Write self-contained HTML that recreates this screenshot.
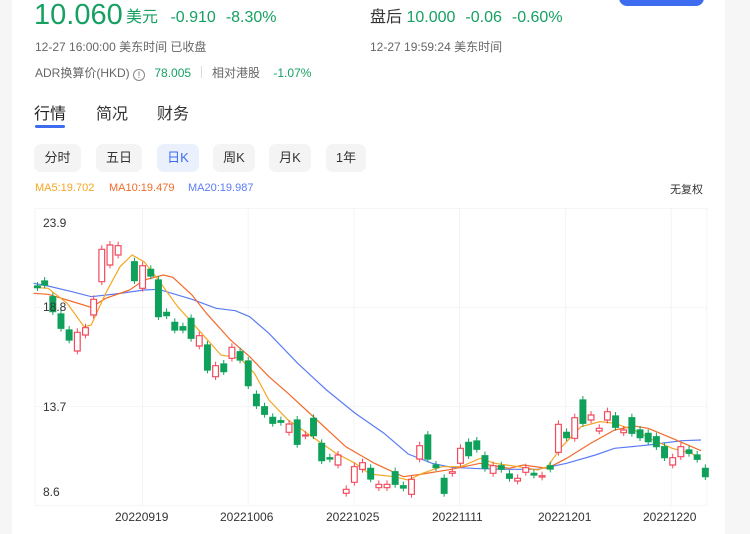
<!DOCTYPE html>
<html><head><meta charset="utf-8"><style>
*{margin:0;padding:0;box-sizing:border-box}
body{width:750px;height:534px;background:#f6f6f7;position:relative;overflow:hidden;font-family:"Liberation Sans","Noto Sans CJK SC",sans-serif;color:#333}
.card{position:absolute;left:12px;top:0;width:713px;height:534px;background:#fff}
.a{position:absolute;white-space:nowrap}
.g{color:#16a062}
.gray{color:#666}
.btn{position:absolute;top:144px;height:28px;border-radius:7px;background:#f4f4f5;font-size:13px;line-height:28px;text-align:center;color:#333}
.ax{position:absolute;font-size:12px;color:#333}
</style></head><body>
<div class="card"></div>
<div class="a" style="left:619px;top:-10px;width:85px;height:16px;background:#3d6cf0;border-radius:8px"></div>
<div class="a g" style="left:34px;top:-2px;font-size:29px;line-height:34px">10.060</div>
<div class="a g" style="left:126px;top:8px;font-size:16px;line-height:20px">美元 <span style="margin-left:8px">-0.910</span><span style="margin-left:10px">-8.30%</span></div>
<div class="a" style="left:370px;top:8px;font-size:16px;line-height:20px">盘后 <span class="g">10.000</span><span class="g" style="margin-left:10px">-0.06</span><span class="g" style="margin-left:10px">-0.60%</span></div>
<div class="a gray" style="left:35px;top:38px;font-size:12px">12-27 16:00:00 美东时间 已收盘</div>
<div class="a gray" style="left:370px;top:38px;font-size:12px">12-27 19:59:24 美东时间</div>
<div class="a gray" style="left:35px;top:64px;font-size:12px">ADR换算价(HKD) <span style="display:inline-block;width:12px;height:12px;border:1px solid #888;border-radius:50%;font-size:9px;line-height:10px;text-align:center;vertical-align:-1px">!</span> <span class="g" style="margin-left:6px">78.005</span><span style="display:inline-block;width:1px;height:12px;background:#ddd;margin:0 10px;vertical-align:-1px"></span>相对港股 <span class="g" style="margin-left:10px">-1.07%</span></div>
<div class="a" style="left:34px;top:100px;font-size:16px;color:#222">行情</div>
<div class="a" style="left:96px;top:100px;font-size:16px;color:#333">简况</div>
<div class="a" style="left:157px;top:100px;font-size:16px;color:#333">财务</div>
<div class="a" style="left:35px;top:125px;width:30px;height:3px;background:#3d6cf0;border-radius:2px"></div>
<div class="btn" style="left:34px;width:47px">分时</div>
<div class="btn" style="left:96px;width:46px">五日</div>
<div class="btn" style="left:157px;width:42px;background:#ebf0fd;color:#3d6cf0">日K</div>
<div class="btn" style="left:213px;width:42px">周K</div>
<div class="btn" style="left:269px;width:42px">月K</div>
<div class="btn" style="left:326px;width:40px">1年</div>
<div class="a" style="left:35px;top:182px;font-size:11px;color:#f5a623">MA5:19.702</div>
<div class="a" style="left:109px;top:182px;font-size:11px;color:#f26b2a">MA10:19.479</div>
<div class="a" style="left:188px;top:182px;font-size:11px;color:#5b7cf5">MA20:19.987</div>
<div class="a" style="left:670px;top:181px;font-size:11px;color:#333">无复权</div>
<svg style="position:absolute;left:0;top:200px" width="750" height="334" viewBox="0 0 1562 1002" preserveAspectRatio="none">
<g stroke="#f4f4f4" stroke-width="1" fill="none">
<line x1="73" y1="25" x2="1472" y2="25" vector-effect="non-scaling-stroke"/>
<line x1="73" y1="322" x2="1472" y2="322" vector-effect="non-scaling-stroke"/>
<line x1="73" y1="620" x2="1472" y2="620" vector-effect="non-scaling-stroke"/>
<line x1="73" y1="917" x2="1472" y2="917" vector-effect="non-scaling-stroke"/>
<line x1="73" y1="25" x2="73" y2="917" vector-effect="non-scaling-stroke"/>
<line x1="297" y1="25" x2="297" y2="917" vector-effect="non-scaling-stroke"/>
<line x1="517" y1="25" x2="517" y2="917" vector-effect="non-scaling-stroke"/>
<line x1="737" y1="25" x2="737" y2="917" vector-effect="non-scaling-stroke"/>
<line x1="957" y1="25" x2="957" y2="917" vector-effect="non-scaling-stroke"/>
<line x1="1178" y1="25" x2="1178" y2="917" vector-effect="non-scaling-stroke"/>
<line x1="1398" y1="25" x2="1398" y2="917" vector-effect="non-scaling-stroke"/>
<line x1="1472" y1="25" x2="1472" y2="917" vector-effect="non-scaling-stroke"/>
</g>
<polyline fill="none" stroke="#5b7cf5" stroke-width="1.2" vector-effect="non-scaling-stroke" points="70,250 100,258 150,275 190,290 240,282 300,270 330,268 400,298 450,325 490,332 520,350 560,400 620,490 680,570 740,640 800,700 850,762 900,790 940,802 1000,806 1060,808 1120,808 1180,790 1240,765 1280,745 1350,735 1420,722 1460,720"/>
<polyline fill="none" stroke="#f26b2a" stroke-width="1.2" vector-effect="non-scaling-stroke" points="70,280 100,283 140,300 190,322 220,295 270,270 300,240 340,225 360,232 400,285 430,340 480,420 520,470 560,530 600,580 660,660 720,740 780,790 840,830 880,822 940,808 1000,790 1060,805 1090,795 1140,805 1180,775 1230,730 1280,690 1320,678 1350,685 1400,715 1460,752"/>
<polyline fill="none" stroke="#f5a623" stroke-width="1.2" vector-effect="non-scaling-stroke" points="70,262 100,265 140,310 175,380 190,375 220,280 250,200 275,165 300,185 330,240 370,320 420,400 460,465 500,475 530,520 560,600 600,660 640,700 700,760 740,790 770,822 820,830 850,840 880,820 920,800 960,800 1000,775 1030,790 1080,800 1120,810 1140,800 1170,740 1210,680 1250,665 1280,670 1320,690 1360,720 1400,745 1440,760 1460,778"/>
<g id="candles"></g>
</svg>
<script>
var d=[[78,258,263,'g'],[93,243,255,'g'],[110,290,335,'g'],[127,342,385,'g'],[144,390,420,'g'],[161,397,453,'r'],[178,383,405,'r'],[195,298,345,'r'],[212,148,245,'r'],[229,135,195,'r'],[246,137,165,'r'],[280,185,242,'g'],[297,197,265,'r'],[314,208,228,'g'],[330,240,350,'g'],[347,337,347,'g'],[364,367,390,'g'],[381,380,390,'g'],[398,355,415,'g'],[415,407,438,'r'],[432,435,510,'g'],[449,497,530,'r'],[466,492,515,'g'],[483,442,475,'r'],[500,455,480,'g'],[517,483,557,'g'],[534,583,617,'g'],[551,620,643,'g'],[568,652,670,'g'],[585,662,667,'g'],[602,672,697,'r'],[619,660,733,'g'],[636,705,708,'r'],[653,655,707,'g'],[670,730,782,'g'],[687,773,777,'g'],[704,765,795,'r'],[721,868,880,'r'],[738,800,847,'r'],[755,788,808,'r'],[772,805,837,'g'],[789,853,863,'r'],[806,853,863,'r'],[823,815,853,'g'],[840,857,864,'g'],[857,838,883,'r'],[874,737,777,'r'],[891,705,777,'g'],[908,795,803,'g'],[925,835,880,'g'],[942,815,820,'r'],[959,745,790,'r'],[976,727,767,'g'],[993,723,748,'g'],[1010,767,805,'g'],[1027,797,820,'r'],[1044,797,808,'g'],[1061,822,835,'g'],[1078,835,843,'r'],[1095,803,817,'r'],[1112,820,825,'g'],[1129,827,831,'r'],[1146,797,807,'g'],[1163,673,757,'r'],[1180,697,713,'g'],[1197,653,715,'r'],[1214,600,670,'g'],[1231,645,660,'r'],[1248,685,693,'r'],[1265,635,660,'r'],[1282,648,682,'g'],[1299,690,698,'r'],[1316,653,700,'g'],[1333,690,713,'g'],[1350,700,725,'g'],[1367,710,740,'g'],[1384,740,773,'g'],[1401,773,795,'r'],[1418,740,770,'r'],[1435,750,760,'g'],[1452,765,778,'g'],[1469,805,830,'g']];
var s='';
d.forEach(function(c){var col=c[3]=='g'?'#0fa15b':'#f2495c';
s+='<line x1="'+c[0]+'" x2="'+c[0]+'" y1="'+(c[1]-12)+'" y2="'+(c[2]+10)+'" stroke="'+col+'" stroke-width="1" vector-effect="non-scaling-stroke"/>';
s+='<rect x="'+(c[0]-6)+'" y="'+c[1]+'" width="12" height="'+Math.max(3,c[2]-c[1])+'" fill="'+(c[3]=='g'?col:'#fff')+'" stroke="'+col+'" stroke-width="1.2" vector-effect="non-scaling-stroke"/>';});
document.getElementById('candles').innerHTML=s;
</script>
<div class="ax" style="left:43px;top:216px">23.9</div>
<div class="ax" style="left:43px;top:300px">18.8</div>
<div class="ax" style="left:43px;top:400px">13.7</div>
<div class="ax" style="left:43px;top:485px">8.6</div>
<div class="ax" style="left:115px;top:510px">20220919</div>
<div class="ax" style="left:220px;top:510px">20221006</div>
<div class="ax" style="left:326px;top:510px">20221025</div>
<div class="ax" style="left:432px;top:510px">20221111</div>
<div class="ax" style="left:538px;top:510px">20221201</div>
<div class="ax" style="left:643px;top:510px">20221220</div>
</body></html>
